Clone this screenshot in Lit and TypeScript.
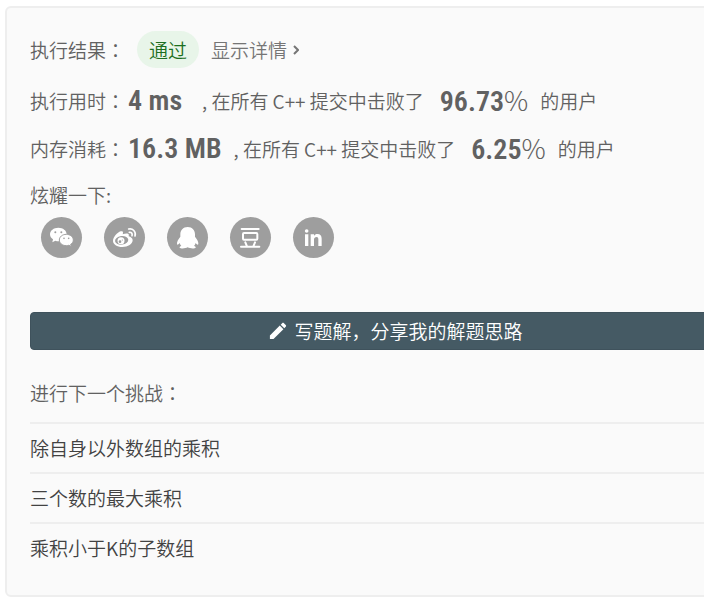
import { LitElement, html, css, svg } from "lit";
import { customElement } from "lit/decorators.js";

interface Stat {
  label: string;
  value: string;
  percent: string;
}

const stats: Stat[] = [
  { label: "执行用时", value: "4 ms", percent: "96.73" },
  { label: "内存消耗", value: "16.3 MB", percent: "6.25" },
];

const challenges = ["除自身以外数组的乘积", "三个数的最大乘积", "乘积小于K的子数组"];

const shares = [
  {
    name: "微信",
    icon: svg`
      <path class="fill" d="M52 32c-14 0-25 8.500-25 20 0 6.500 3.500 11.500 9 15l-2 9 9-5c3 1 6 1.500 10 1.500 13 0 24-9 24-20.500S66 32 52 32z"/>
      <path class="fill cut" d="M76 52c-12 0-21 7.500-21 17s9 17 21 17c3 0 5-.4 7.500-1.200l7.500 4-2-7c5-3 8-7.500 8-12.800 0-9.500-9.500-17-21-17z"/>
      <g class="hole"><circle cx="43" cy="46" r="3"/><circle cx="61" cy="46" r="3"/><circle cx="69" cy="64" r="2.500"/><circle cx="83" cy="64" r="2.500"/></g>`,
  },
  {
    name: "微博",
    icon: svg`
      <path class="fill" d="M50 43c4-1 7 0 7 4 0 2-1 4-1 5 5-2 12-4 16-2 4 2 2 6 2 8 6 2 12 5 12 12 0 11-14 20-31 20-16 0-28-8-28-18 0-11 13-26 23-29z"/>
      <ellipse class="hole" cx="53" cy="70" rx="20" ry="13" transform="rotate(-8 53 70)"/>
      <circle class="fill" cx="51" cy="71" r="10.500"/>
      <circle class="hole" cx="48" cy="74" r="4"/>
      <circle class="hole" cx="55" cy="69" r="1.800"/>
      <path class="line thin" d="M74 36c12-3 23 8 19 21M76 46c6-1 10 4 8 10"/>`,
  },
  {
    name: "QQ",
    icon: svg`
      <path class="fill" d="M62 30c-14 0-22 10-22 22v7c-5 6-11 15-10 22 .5 4 4 2 8-3 1 4 3 7 5 9-4 1-6 3-5 5 2 3 17 3 24-1 7 4 22 4 24 1 1-2-1-4-5-5 2-2 4-5 5-9 4 5 7 7 8 3 1-7-5-16-10-22v-7c0-12-8-22-22-22z"/>`,
  },
  {
    name: "豆瓣",
    icon: svg`
      <path class="line" d="M35 36H86M42 48H79c2 0 3 1 3 3v14c0 2-1 3-3 3H42c-2 0-3-1-3-3V51c0-2 1-3 3-3zM46 76l5 12M75 76l-5 12M33 89H88"/>`,
  },
  {
    name: "LinkedIn",
    icon: svg`
      <circle class="fill" cx="41" cy="42" r="5.500"/>
      <path class="fill" d="M36 52h10v35h-10zM53 52h10v5c2-4 6-6 10-6 9 0 13 5 13 14v22h-10V67c0-5-2-7-5-7-5 0-8 3-8 8v19h-10z"/>`,
  },
];

@customElement("app-root")
export class AppRoot extends LitElement {
  static styles = css`
    :host {
      display: block;
      overflow: hidden;
      padding: 6px 0 5px 5px;
      background: #fff;
      color: #616161;
      font: 350 19px/28px "Noto Sans CJK SC", "Liberation Sans", sans-serif;
      white-space: nowrap;
    }
    .card {
      box-sizing: border-box;
      margin-right: -83px;
      padding: 23px;
      border: 2px solid #eee;
      border-radius: 6px;
      background: #fafafa;
    }
    .colon {
      font-family: "Noto Sans CJK TC", sans-serif;
    }
    .result {
      display: flex;
      align-items: center;
      height: 37px;
      margin-bottom: 9px;
    }
    .badge {
      margin: 0 12px;
      padding: 0 12px;
      border-radius: 19px;
      background: #e8f5e9;
      color: #1b6e20;
      line-height: 37px;
    }
    a {
      color: inherit;
      text-decoration: none;
    }
    .details {
      display: flex;
      align-items: center;
      gap: 6px;
      color: #757575;
    }
    .chevron {
      width: 6px;
      height: 10px;
      fill: none;
      stroke: #757575;
      stroke-width: 2;
    }
    .stat {
      display: flex;
      align-items: center;
      height: 48px;
      margin: 0;
      line-height: 48px;
    }
    .number {
      min-width: 62px;
      margin: 0 12px 0 3px;
      font: 600 28px/48px "Roboto Condensed", Roboto, "Liberation Sans", sans-serif;
    }
    .percent {
      margin: 0 12px 0 16px;
    }
    .percent .number {
      margin: 0;
    }
    .sign {
      font: 300 27px/48px "Noto Sans CJK SC", sans-serif;
    }
    .brag {
      margin: 0;
      line-height: 44px;
    }
    .shares {
      display: flex;
      gap: 22px;
      padding-left: 11px;
    }
    .share {
      width: 41px;
      height: 41px;
      padding: 0;
      border: 0;
      border-radius: 50%;
      background: #9e9e9e;
    }
    .share svg {
      display: block;
      width: 41px;
      height: 41px;
    }
    .fill {
      fill: #fff;
    }
    .cut {
      stroke: #9e9e9e;
      stroke-width: 3;
    }
    .hole {
      fill: #9e9e9e;
    }
    .line {
      fill: none;
      stroke: #fff;
      stroke-width: 6;
      stroke-linecap: round;
      stroke-linejoin: round;
    }
    .thin {
      stroke-width: 5;
    }
    .write {
      display: flex;
      align-items: center;
      justify-content: center;
      gap: 7px;
      box-sizing: border-box;
      width: 100%;
      height: 38px;
      margin-top: 54px;
      padding: 0;
      border: 1px solid #3f525c;
      border-radius: 4px;
      background: #455a64;
      color: #fff;
      font: inherit;
    }
    .pencil {
      width: 18px;
      height: 18px;
      fill: #fff;
    }
    .next {
      height: 58px;
      margin: 0;
      padding-top: 14px;
      font: inherit;
      line-height: 58px;
    }
    .list {
      margin: 0;
      padding: 0;
      list-style: none;
      color: #424242;
    }
    .list li {
      border-top: 2px solid #eee;
      line-height: 48px;
    }
  `;

  render() {
    return html`
      <main class="card" lang="zh-CN">
        <div class="result">
          <span>执行结果<span class="colon" lang="zh-TW">：</span></span>
          <span class="badge">通过</span>
          <a class="details" href="#details">
            显示详情
            <svg class="chevron" viewBox="0 0 6 10" aria-hidden="true"><path d="M1 1L5 5L1 9" /></svg>
          </a>
        </div>
        ${stats.map(
          (s) => html`
            <p class="stat">
              <span>${s.label}<span class="colon" lang="zh-TW">：</span></span>
              <span class="number">${s.value}</span>
              <span>, 在所有 C++ 提交中击败了</span>
              <span class="percent"><span class="number">${s.percent}</span><span class="sign">%</span></span>
              <span>的用户</span>
            </p>
          `
        )}
        <p class="brag">炫耀一下:</p>
        <div class="shares">
          ${shares.map(
            (s) => html`
              <button class="share" type="button" aria-label=${s.name}>
                <svg viewBox="0 0 123 123" aria-hidden="true">${s.icon}</svg>
              </button>
            `
          )}
        </div>
        <button class="write" type="button">
          <svg class="pencil" viewBox="0 0 20 20" aria-hidden="true">
            <path d="M1 19v-4L12 4l4 4L5 19zM13 3l1.600-1.600c.6-.6 1.400-.6 2 0l2 2c.6.6.6 1.400 0 2L17 7z" />
          </svg>
          <span>写题解，分享我的解题思路</span>
        </button>
        <h2 class="next">进行下一个挑战<span class="colon" lang="zh-TW">：</span></h2>
        <ul class="list">
          ${challenges.map((c) => html`<li><a href="#problem">${c}</a></li>`)}
        </ul>
      </main>
    `;
  }
}
